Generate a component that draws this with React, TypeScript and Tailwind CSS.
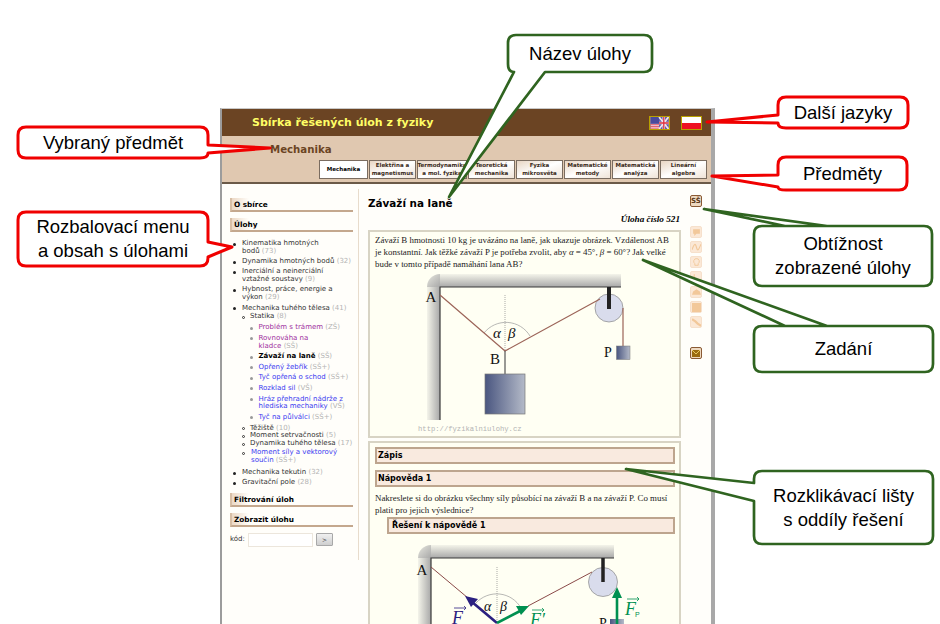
const tabs = [
  ['Mechanika', ''],
  ['Elektřina a', 'magnetismus'],
  ['Termodynamika', 'a mol. fyzika'],
  ['Teoretická', 'mechanika'],
  ['Fyzika', 'mikrosvěta'],
  ['Matematické', 'metody'],
  ['Matematická', 'analýza'],
  ['Lineární', 'algebra'],
];

function Count({ children }: { children: string }) {
  return <span className="text-[#b4b4b4]">{'\u00a0'}{children}</span>;
}

function SideHead({ children }: { children: string }) {
  return (
    <div className="h-[14px] border-l-2 border-b-2 border-l-[#d8bfa6] border-b-[#c4a88e] bg-gradient-to-r from-[#ecd9c6] to-[#fffefa] to-[14%] pl-[2px] text-[7.3px] leading-[14px] font-bold text-black">
      {children}
    </div>
  );
}

function Bar({ children, indent }: { children: string; indent?: boolean }) {
  return (
    <div
      className={`${indent ? 'ml-[12px] pl-[3px]' : 'pl-[1px]'} h-[17px] border-2 border-[#bda58e] bg-[#f9eadf] text-[8px] leading-[14px] font-bold text-black`}
    >
      {children}
    </div>
  );
}

function Top({ children, sub }: { children: React.ReactNode; sub?: React.ReactNode }) {
  return (
    <li className="relative mb-[2.5px] pl-[12px] before:absolute before:left-[3px] before:top-[2.5px] before:h-[3px] before:w-[3px] before:rounded-full before:bg-[#222] before:content-['']">
      {children}
      {sub}
    </li>
  );
}

function Second({ children, sub }: { children: React.ReactNode; sub?: React.ReactNode }) {
  return (
    <li className="relative pl-[8px] before:absolute before:left-[0px] before:top-[2.5px] before:h-[3px] before:w-[3px] before:rounded-full before:border-[0.5px] before:border-[#333] before:content-['']">
      {children}
      {sub}
    </li>
  );
}

function Third({ children }: { children: React.ReactNode }) {
  return (
    <li className="relative mb-[2.8px] pl-[8.5px] before:absolute before:left-[0px] before:top-[2.5px] before:h-[3px] before:w-[3px] before:rounded-full before:bg-[#999] before:content-['']">
      {children}
    </li>
  );
}

function Task({ name, level, color, bold }: { name: React.ReactNode; level: string; color: string; bold?: boolean }) {
  return (
    <Third>
      <span className={`${color} ${bold ? 'font-bold' : ''}`}>{name}</span>
      <Count>{level}</Count>
    </Third>
  );
}

function SideIcon({ faded, children }: { faded?: boolean; children: React.ReactNode }) {
  return (
    <div
      className={`flex h-[12px] w-[12px] items-center justify-center rounded-[2px] border ${
        faded ? 'border-[#f6e0cb] bg-[#fbe8d6] text-[#f2c89a]' : 'border-[#8a5a34] bg-[#eed9c0] text-[#5a3a1c]'
      }`}
    >
      {children}
    </div>
  );
}

function UkFlag() {
  return (
    <svg width="21" height="14" viewBox="0 0 21 14" className="border border-[#b8a000]">
      <rect width="21" height="14" fill="#f2e6ee" />
      <rect x="0" y="0" width="10" height="8" fill="#4a4a9c" />
      <path d="M0 9H10M0 11H10M0 13H10" stroke="#e04050" strokeWidth="1" />
      <rect x="10" y="0" width="11" height="14" fill="#5a5aa8" />
      <path d="M10 0L21 14M21 0L10 14" stroke="#f2e6ee" strokeWidth="2" />
      <path d="M15.5 0V14M10 7H21" stroke="#f2e6ee" strokeWidth="3" />
      <path d="M15.5 0V14M10 7H21" stroke="#e03040" strokeWidth="1.5" />
    </svg>
  );
}

function Wall({ x, y, right, bottom }: { x: number; y: number; right: number; bottom: number }) {
  return (
    <>
      <rect x={x - 13} y={y} width="13" height={bottom - y} fill="url(#wallH)" />
      <rect x={x} y={y - 13} width={right - x} height="13" fill="url(#wallV)" />
      <path d={`M${x} ${y}L${x - 13} ${y}A13 13 0 0 1 ${x} ${y - 13}Z`} fill="url(#wallC)" />
      <path d={`M${x} ${bottom}V${y}H${right}`} fill="none" stroke="#3a3a3a" strokeWidth="1.2" />
    </>
  );
}

function Gradients() {
  return (
    <defs>
      <linearGradient id="wallH" x1="0" x2="1" y1="0" y2="0">
        <stop offset="0" stopColor="#f4f4ea" />
        <stop offset="1" stopColor="#a8a8a8" />
      </linearGradient>
      <linearGradient id="wallV" x1="0" x2="0" y1="0" y2="1">
        <stop offset="0" stopColor="#f4f4ea" />
        <stop offset="1" stopColor="#a8a8a8" />
      </linearGradient>
      <linearGradient id="wallC" x1="0" x2="1" y1="0" y2="1">
        <stop offset="0" stopColor="#e8e8e0" />
        <stop offset="1" stopColor="#a8a8a8" />
      </linearGradient>
      <linearGradient id="box" x1="0" x2="1" y1="0" y2="0">
        <stop offset="0" stopColor="#4a5680" />
        <stop offset="1" stopColor="#b4bac8" />
      </linearGradient>
    </defs>
  );
}

function DiagramOne() {
  const serif = '"Liberation Serif", serif';
  return (
    <svg width="260" height="165" viewBox="400 270 260 165" className="ml-[25px] block">
      <Gradients />
      <Wall x={440} y={287} right={621} bottom={420} />
      <path d="M505 295V351" stroke="#888" strokeWidth="0.7" strokeDasharray="1 1" />
      <path d="M484 333A28 28 0 0 1 530 336" fill="none" stroke="#999" strokeWidth="0.7" />
      <circle cx="609" cy="308" r="14" fill="#d9dcec" stroke="#888" strokeWidth="0.7" />
      <path d="M609 287V309" stroke="#222" strokeWidth="4" />
      <path d="M440 295L505 351L600 299M623 308V346" fill="none" stroke="#9c6458" strokeWidth="1.2" />
      <path d="M505 351V374" stroke="#555" strokeWidth="1.2" />
      <rect x="485" y="374" width="40" height="40" fill="url(#box)" stroke="#777" strokeWidth="0.7" />
      <rect x="616.5" y="346" width="13.5" height="13.5" fill="url(#box)" stroke="#777" strokeWidth="0.5" />
      <text x="425.5" y="302" fontFamily={serif} fontSize="15" fill="#111">A</text>
      <text x="490" y="364" fontFamily={serif} fontSize="15" fill="#111">B</text>
      <text x="604" y="357" fontFamily={serif} fontSize="14" fill="#111">P</text>
      <text x="493" y="338" fontFamily={serif} fontSize="15" fontStyle="italic" fill="#111">α</text>
      <text x="508" y="338" fontFamily={serif} fontSize="15" fontStyle="italic" fill="#111">β</text>
      <text x="418" y="430.5" fontFamily='"Liberation Mono", monospace' fontSize="7.2" fill="#b4b4b4">http://fyzikalniulohy.cz</text>
    </svg>
  );
}

function DiagramTwo() {
  const serif = '"Liberation Serif", serif';
  return (
    <svg width="260" height="90" viewBox="400 540 260 90" className="ml-[25px] block">
      <Gradients />
      <Wall x={431} y={559} right={614} bottom={640} />
      <path d="M497 568V624" stroke="#888" strokeWidth="0.7" strokeDasharray="1 1" />
      <path d="M476 604A28 28 0 0 1 521 609" fill="none" stroke="#999" strokeWidth="0.7" />
      <circle cx="603" cy="583" r="14.5" fill="#d9dcec" stroke="#888" strokeWidth="0.7" />
      <path d="M603 559V583" stroke="#222" strokeWidth="3.5" />
      <path d="M431 568L468 599M528 607L592 573" fill="none" stroke="#8a4a48" strokeWidth="1" />
      <path d="M497 624L472 603" stroke="#2b2080" strokeWidth="2.6" />
      <path d="M465 597L478 600L471 608Z" fill="#2b2080" />
      <path d="M497 624L522 611" stroke="#009050" strokeWidth="2.6" />
      <path d="M529 607L516 607L521 616Z" fill="#009050" />
      <rect x="610" y="620" width="14" height="14" fill="url(#box)" />
      <path d="M617 630V596" stroke="#009050" strokeWidth="2.6" />
      <path d="M617 588L612 599H622Z" fill="#009050" />
      <text x="422" y="576" textAnchor="middle" fontFamily={serif} fontSize="15" fill="#111">A</text>
      <text x="599" y="629" fontFamily={serif} fontSize="14" fill="#111">P</text>
      <text x="484" y="612" fontFamily={serif} fontSize="14" fontStyle="italic" fill="#111">α</text>
      <text x="500" y="612" fontFamily={serif} fontSize="14" fontStyle="italic" fill="#111">β</text>
      <path d="M454 609H466M464 607L466 609L464 611" fill="none" stroke="#2b2080" strokeWidth="0.8" />
      <text x="452" y="625" fontFamily={serif} fontSize="18" fontStyle="italic" fill="#2b2080">F</text>
      <path d="M532 611H544M542 609L544 611L542 613" fill="none" stroke="#009050" strokeWidth="0.8" />
      <text x="530" y="627" fontFamily={serif} fontSize="18" fontStyle="italic" fill="#009050">F′</text>
      <path d="M627 600H639M637 598L639 600L637 602" fill="none" stroke="#009050" strokeWidth="0.8" />
      <text x="625" y="616" fontFamily={serif} fontSize="18" fontStyle="italic" fill="#009050">F</text>
      <text x="635" y="618" fontFamily='"Liberation Sans", sans-serif' fontSize="7" fill="#009050">P</text>
    </svg>
  );
}

const greenBubbles = [
  'M516 35H644Q652 35 652 43V64Q652 72 644 72H545L449 197L514 72Q508 72 508 64V43Q508 35 516 35Z',
  'M762 226H924Q932 226 932 234V278Q932 286 924 286H762Q754 286 754 278V234Q754 226 762 226H785L704 209L827 226H924',
  'M762 326H925Q933 326 933 334V364Q933 372 925 372H762Q754 372 754 364V334Q754 326 762 326H785L643 260L827 326H925',
  'M762 471H925Q933 471 933 479V536Q933 544 925 544H762Q754 544 754 536V501L626 469L754 483V479Q754 471 762 471Z',
];

const redBubbles = [
  'M786 97H900Q908 97 908 105V120Q908 128 900 128H786Q778 128 778 123L707 122L778 115V105Q778 97 786 97Z',
  'M786 157H899Q907 157 907 165V182Q907 190 899 190H786Q778 190 778 187L712 176L778 175V165Q778 157 786 157Z',
  'M26 127H200Q208 127 208 135V145L270 148L208 153Q208 158 200 158H26Q18 158 18 150V135Q18 127 26 127Z',
  'M26 212H200Q208 212 208 220V242L232 247L208 257V258Q208 266 200 266H26Q18 266 18 258V220Q18 212 26 212Z',
];

function Callout({ className, children }: { className: string; children: React.ReactNode }) {
  return (
    <div className={`absolute flex items-center justify-center text-center font-['Liberation_Sans',sans-serif] text-[18.5px] leading-[24px] text-black ${className}`}>
      {children}
    </div>
  );
}

export default function App() {
  return (
    <div className="relative h-[624px] w-[940px] overflow-hidden bg-white pl-[220px] pt-[108px]">
      <div className="w-[495px] border-l-2 border-r-4 border-l-[#9c9c9c] border-r-[#a8a8a8] border-t border-t-[#c8c8c8] bg-[#fffefa] font-['DejaVu_Sans',sans-serif]">
        {/* Header */}
        <div className="flex h-[27px] items-center justify-between bg-[#6b4423] pl-[30px] pr-[9px] pt-[1px]">
          <span className="text-[11px] font-bold text-[#ffff66]">Sbírka řešených úloh z fyziky</span>
          <div className="flex items-center gap-[11px]">
            <UkFlag />
            <div className="flex h-[14px] w-[21px] flex-col border border-[#b8a000]">
              <div className="flex-1 bg-white" />
              <div className="flex-1 bg-[#ee1122]" />
            </div>
          </div>
        </div>

        {/* Subject strip */}
        <div className="h-[48px] border-b-2 border-b-[#6b5a48] bg-[#e0c8b0]">
          <div className="pl-[48px] pt-[7px] text-[10.2px] leading-[13px] font-bold text-[#6b4423]">Mechanika</div>
          <div className="mt-[4px] flex justify-end gap-[1px] pr-[4px]">
            {tabs.map(([a, b], i) => (
              <div
                key={a}
                className={`flex h-[19px] flex-col items-center justify-center border-[1.5px] border-[#7a6c60] text-[5.5px] leading-[7.5px] font-bold text-[#3a2a1a] ${
                  i === 0 ? 'w-[49px] bg-white text-black' : 'bg-gradient-to-br from-[#e8d6c4] via-white to-[#f0e4d8]'
                } ${i === 2 ? 'w-[50px]' : i === 0 ? '' : 'w-[47px]'}`}
              >
                <span>{a}</span>
                {b && <span>{b}</span>}
              </div>
            ))}
          </div>
        </div>

        {/* Body */}
        <div className="flex h-[440px]">
          {/* Left menu */}
          <aside className="mt-[5px] h-[371px] w-[137px] shrink-0 border-r border-r-[#e8dccc] pl-[8px] pr-[5px] pt-[9px]">
            <SideHead>O sbírce</SideHead>
            <div className="mt-[6px]">
              <SideHead>Úlohy</SideHead>
            </div>
            <ul className="mt-[8px] text-[7px] leading-[7.8px] text-[#333]">
              <Top>
                Kinematika hmotných<br />bodů<Count>(73)</Count>
              </Top>
              <Top>
                Dynamika hmotných bodů<Count>(32)</Count>
              </Top>
              <Top>
                Inerciální a neinerciální<br />vztažné soustavy<Count>(9)</Count>
              </Top>
              <Top>
                Hybnost, práce, energie a<br />výkon<Count>(29)</Count>
              </Top>
              <Top
                sub={
                  <ul className="mb-[4px]">
                    <Second
                      sub={
                        <ul className="mt-[3px]">
                          <Task name="Problém s trámem" level="(ZŠ)" color="text-[#a030a0]" />
                          <Task name={<>Rovnováha na<br />kladce</>} level="(SŠ)" color="text-[#a030a0]" />
                          <Task name="Závaží na laně" level="(SŠ)" color="text-black" bold />
                          <Task name="Opřený žebřík" level="(SŠ+)" color="text-[#3a3af0]" />
                          <Task name="Tyč opřená o schod" level="(SŠ+)" color="text-[#3a3af0]" />
                          <Task name="Rozklad sil" level="(VŠ)" color="text-[#3a3af0]" />
                          <Task name={<>Hráz přehradní nádrže z<br />hlediska mechaniky</>} level="(VŠ)" color="text-[#3a3af0]" />
                          <Task name="Tyč na půlválci" level="(SŠ+)" color="text-[#3a3af0]" />
                        </ul>
                      }
                    >
                      Statika<Count>(8)</Count>
                    </Second>
                    <Second>
                      Těžiště<Count>(10)</Count>
                    </Second>
                    <Second>
                      Moment setrvačnosti<Count>(5)</Count>
                    </Second>
                    <Second>
                      Dynamika tuhého tělesa<Count>(17)</Count>
                    </Second>
                    <div className="mt-[1.5px]">
                      <Second>
                        <span className="ml-[1px] inline-block">
                          <span className="text-[#3a3af0]">Moment síly a vektorový<br />součin</span>
                          <Count>(SŠ+)</Count>
                        </span>
                      </Second>
                    </div>
                  </ul>
                }
              >
                <div className="mb-[1px]">
                  Mechanika tuhého tělesa<Count>(41)</Count>
                </div>
              </Top>
              <Top>
                Mechanika tekutin<Count>(32)</Count>
              </Top>
              <Top>
                Gravitační pole<Count>(28)</Count>
              </Top>
            </ul>
            <div className="mt-[5.5px]">
              <SideHead>Filtrování úloh</SideHead>
            </div>
            <div className="mt-[6px]">
              <SideHead>Zobrazit úlohu</SideHead>
            </div>
            <div className="mt-[6px] flex items-center text-[7px] text-[#333]">
              <span className="w-[18px]">kód:</span>
              <div className="h-[14px] w-[65px] border border-[#ece6dc] bg-white" />
              <div className="ml-[3px] flex h-[13px] w-[17px] items-center justify-center rounded-[1px] border border-[#a8a8a8] bg-gradient-to-b from-[#f0f0f0] to-[#cfcfcf] text-[6px] text-[#333]">
                &gt;
              </div>
            </div>
          </aside>

          {/* Task content */}
          <main className="w-[322px] shrink-0 pl-[9px] pt-[12px]">
            <h1 className="text-[10.4px] leading-[14px] font-bold text-black">Závaží na laně</h1>
            <div className="mt-[3px] pr-[1px] text-right font-['Liberation_Serif',serif] text-[9.2px] leading-[12px] font-bold italic text-black">
              Úloha číslo 521
            </div>
            <div className="mt-[5px] h-[208px] overflow-hidden border-2 border-[#d8d4c4] bg-[#fffff3] pl-[5px] pr-[4px] pt-[2px]">
              <p className="font-['Liberation_Serif',serif] text-[8.9px] leading-[12px] text-[#222]">
                Závaží B hmotnosti 10 kg je uvázáno na laně, jak ukazuje obrázek. Vzdálenost AB je konstantní. Jak těžké závaží P je potřeba zvolit, aby{' '}
                <i>α</i> = 45°, <i>β</i> = 60°? Jak velké bude v tomto případě namáhání lana AB?
              </p>
              <DiagramOne />
            </div>
            <div className="mt-[3px] h-[190px] overflow-hidden border-2 border-[#d8d4c4] bg-[#fffff3] pl-[5px] pr-[4px] pt-[4px]">
              <Bar>Zápis</Bar>
              <div className="mt-[6px]">
                <Bar>Nápověda 1</Bar>
              </div>
              <p className="mt-[5px] font-['Liberation_Serif',serif] text-[8.9px] leading-[12px] text-[#222]">
                Nakreslete si do obrázku všechny síly působící na závaží B a na závaží P. Co musí platit pro jejich výslednice?
              </p>
              <div className="mt-[1px]">
                <Bar indent>Řešení k nápovědě 1</Bar>
              </div>
              <div className="mt-[5px]">
                <DiagramTwo />
              </div>
            </div>
          </main>

          {/* Right icon column */}
          <div className="flex w-[30px] flex-col pl-[9px] pt-[11px]">
            <SideIcon>
              <span className="text-[7px] leading-none font-bold">SŠ</span>
            </SideIcon>
            <div className="mt-[19px] flex flex-col gap-[3px]">
              <SideIcon faded>
                <svg width="9" height="9" viewBox="0 0 8 8"><path d="M1 1H7V5H4L2 7V5H1Z" fill="currentColor" /></svg>
              </SideIcon>
              <SideIcon faded>
                <svg width="9" height="9" viewBox="0 0 8 8"><path d="M0 6C2 0 3 0 4 4S6 6 8 1" fill="none" stroke="currentColor" /></svg>
              </SideIcon>
              <SideIcon faded>
                <svg width="9" height="9" viewBox="0 0 8 8"><path d="M4 0.5A2.5 2.5 0 0 1 5.5 5V6.5H2.5V5A2.5 2.5 0 0 1 4 0.5Z" fill="none" stroke="currentColor" strokeWidth="0.8" /></svg>
              </SideIcon>
              <SideIcon faded>
                <svg width="9" height="9" viewBox="0 0 8 8"><path d="M2 1V7H7" fill="none" stroke="currentColor" /></svg>
              </SideIcon>
              <SideIcon faded>
                <svg width="9" height="9" viewBox="0 0 8 8"><path d="M1 3L4 1L7 3L8 6H0Z" fill="currentColor" /></svg>
              </SideIcon>
              <SideIcon faded>
                <svg width="9" height="9" viewBox="0 0 8 8"><rect width="8" height="8" fill="currentColor" /></svg>
              </SideIcon>
              <SideIcon faded>
                <svg width="9" height="9" viewBox="0 0 8 8"><path d="M0 1L3 3L5 5L8 7" fill="none" stroke="currentColor" strokeWidth="2" /></svg>
              </SideIcon>
            </div>
            <div className="mt-[19px]">
              <SideIcon>
                <svg width="8" height="7" viewBox="0 0 8 7"><rect width="8" height="7" fill="#9a6a10" /><path d="M0 0L4 4L8 0" fill="none" stroke="#e8c860" /></svg>
              </SideIcon>
            </div>
          </div>
        </div>
      </div>

      {/* Annotation callouts drawn over the screenshot */}
      <svg width="940" height="624" viewBox="0 0 940 624" className="absolute left-0 top-0">
        {greenBubbles.map((d) => (
          <path key={d} d={d} fill="white" stroke="#2f6420" strokeWidth="2.7" strokeLinejoin="round" />
        ))}
        {redBubbles.map((d) => (
          <path key={d} d={d} fill="white" stroke="#f00000" strokeWidth="3" strokeLinejoin="round" />
        ))}
      </svg>
      <Callout className="left-[508px] top-[35px] h-[37px] w-[144px]">Název úlohy</Callout>
      <Callout className="left-[778px] top-[97px] h-[31px] w-[130px]">Další jazyky</Callout>
      <Callout className="left-[778px] top-[157px] h-[33px] w-[129px]">Předměty</Callout>
      <Callout className="left-[18px] top-[127px] h-[31px] w-[190px]">Vybraný předmět</Callout>
      <Callout className="left-[18px] top-[212px] h-[54px] w-[190px]">Rozbalovací menu<br />a obsah s úlohami</Callout>
      <Callout className="left-[754px] top-[226px] h-[60px] w-[178px]">Obtížnost<br />zobrazené úlohy</Callout>
      <Callout className="left-[754px] top-[326px] h-[46px] w-[179px]">Zadání</Callout>
      <Callout className="left-[754px] top-[471px] h-[73px] w-[179px]">Rozklikávací lišty<br />s oddíly řešení</Callout>
    </div>
  );
}
